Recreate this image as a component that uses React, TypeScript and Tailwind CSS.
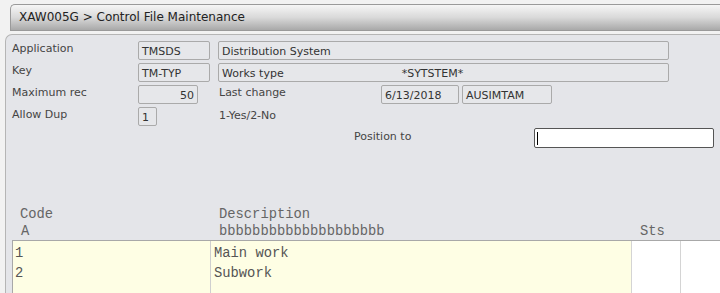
import React from 'react';

const sans = "font-['DejaVu_Sans',Verdana,sans-serif]";
const mono = "font-['Liberation_Mono','Courier_New',monospace]";

function Box({ w, children, right = false, className = '' }: { w: string; children?: React.ReactNode; right?: boolean; className?: string }) {
  return (
    <div
      className={`${w} h-[19px] border border-[#aaaaaa] rounded-[2px] bg-[#e6e7ea] text-[11px] leading-[17px] pt-[1px] text-[#333] px-[3px] whitespace-nowrap ${right ? 'text-right' : ''} ${className}`}
    >
      {children}
    </div>
  );
}

export default function App() {
  return (
    <div className={`w-[720px] h-[293px] overflow-hidden bg-[#f2f2f2] ${sans}`}>
      {/* TITLE BAR */}
      <div className="ml-[10px] mt-[4px] h-[27px] rounded-tl-[5px] border border-r-0 border-[#9a9a9a] bg-gradient-to-b from-[#f6f6f6] via-[#d9d9d9] to-[#a9a9a9] flex items-center pl-[8px] pb-[1px] text-[12px] text-[#222]">
        XAW005G &gt; Control File Maintenance
      </div>

      {/* PANEL */}
      <div className="ml-[5px] mt-[3px] h-[300px] rounded-tl-[7px] border border-r-0 border-[#b5b5b5] bg-[#e4e5e9] pl-[6px] pt-[6px] text-[11px] text-[#444]">
        <div className="flex flex-col gap-[3px]">
          <div className="flex items-center h-[19px]">
            <div className="w-[126px] -mt-[3px]">Application</div>
            <Box w="w-[72px]">TMSDS</Box>
            <Box w="w-[451px] ml-[8px]">Distribution System</Box>
          </div>
          <div className="flex items-center h-[19px]">
            <div className="w-[126px] -mt-[3px]">Key</div>
            <Box w="w-[72px]">TM-TYP</Box>
            <Box w="w-[451px] ml-[8px]">
              <span>Works type</span>
              <span className="ml-[118px]">*SYTSTEM*</span>
            </Box>
          </div>
          <div className="flex items-center h-[19px]">
            <div className="w-[126px] -mt-[3px]">Maximum rec</div>
            <Box w="w-[60px]" right>50</Box>
            <div className="w-[162px] ml-[21px] -mt-[3px]">Last change</div>
            <Box w="w-[78px]">6/13/2018</Box>
            <Box w="w-[90px] ml-[3px]">AUSIMTAM</Box>
          </div>
          <div className="flex items-center h-[19px]">
            <div className="w-[126px] -mt-[2px]">Allow Dup</div>
            <Box w="w-[19px]">1</Box>
            <div className="ml-[62px]">1-Yes/2-No</div>
          </div>
          <div className="flex items-start h-[20px] -mt-[1px]">
            <div className="ml-[342px] w-[180px] mt-[1px]">Position to</div>
            <div className="w-[180px] h-[20px] border border-[#555] rounded-[2px] bg-white flex items-center pl-[2px]">
              <div className="w-px h-[13px] bg-black" />
            </div>
          </div>
        </div>

        {/* TABLE HEADERS */}
        <div className={`${mono} text-[13.8px] text-[#666] mt-[58px]`}>
          <div className="flex h-[17px] leading-[17px]">
            <div className="w-[207px] pl-[8px]">Code</div>
            <div>Description</div>
          </div>
          <div className="flex h-[17px] leading-[17px]">
            <div className="w-[207px] pl-[9px]">A</div>
            <div className="w-[421px]">bbbbbbbbbbbbbbbbbbbb</div>
            <div>Sts</div>
          </div>
        </div>

        {/* TABLE ROWS */}
        <div className={`${mono} text-[13.8px] text-[#555] border-t border-l border-[#a8a8a8] flex h-[60px]`}>
          <div className="w-[198px] bg-[#fefee4] border-r border-[#cfcfcf] pl-[2px] pt-[3px]">
            <div className="h-[20px] leading-[20px]">1</div>
            <div className="h-[20px] leading-[20px]">2</div>
          </div>
          <div className="w-[420px] bg-[#fefee4] pl-[3px] pt-[3px]">
            <div className="h-[20px] leading-[20px]">Main work</div>
            <div className="h-[20px] leading-[20px]">Subwork</div>
          </div>
          <div className="w-[50px] bg-white border-l border-r border-[#d4d4d4]" />
          <div className="flex-1 bg-white" />
        </div>
      </div>
    </div>
  );
}
